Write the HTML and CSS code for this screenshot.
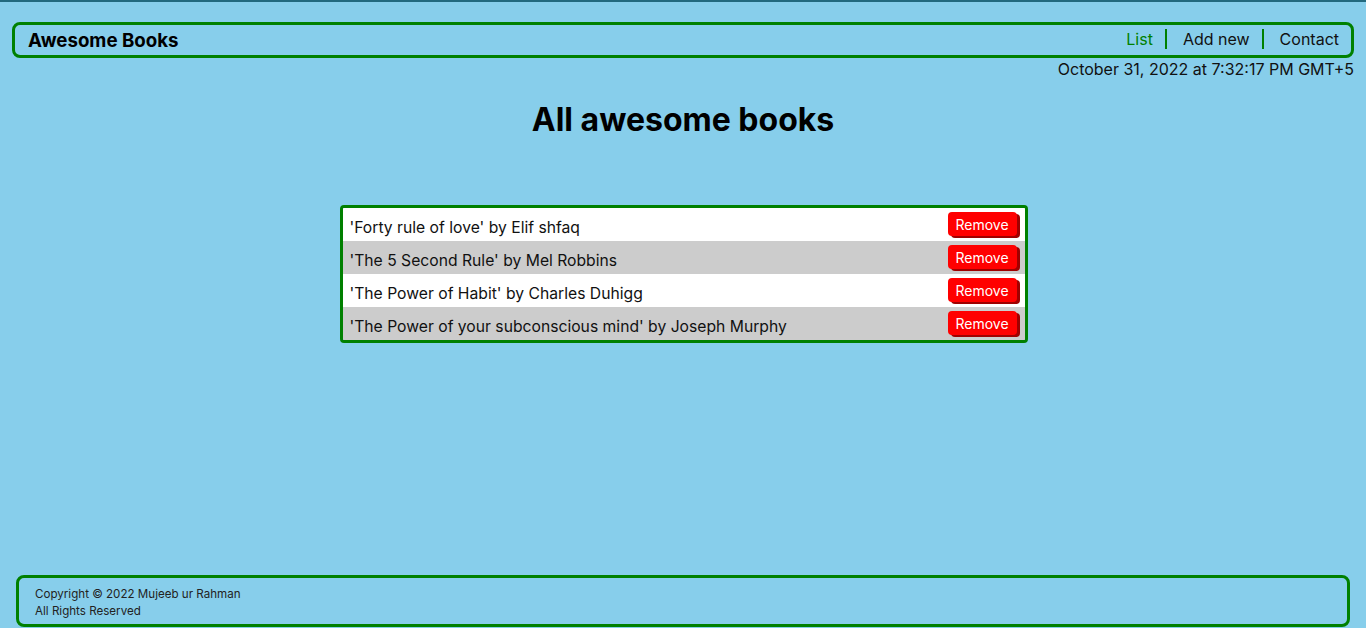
FILE: index.html
```html
<!DOCTYPE html>
<html lang="en">
<head>
<meta charset="utf-8">
<title>Awesome Books</title>
<link rel="stylesheet" href="styles.css">
</head>
<body>
<div class="page">
  <header class="header">
    <span class="brand">Awesome Books</span>
    <nav class="nav">
      <a class="nav-link active">List</a>
      <a class="nav-link sep mid">Add new</a>
      <a class="nav-link sep">Contact</a>
    </nav>
  </header>
  <div class="date">October 31, 2022 at 7:32:17 PM GMT+5</div>
  <main class="main">
    <h1 class="title">All awesome books</h1>
    <ul class="books">
      <li class="book"><span>'Forty rule of love' by Elif shfaq</span><button class="remove">Remove</button></li>
      <li class="book alt"><span>'The 5 Second Rule' by Mel Robbins</span><button class="remove">Remove</button></li>
      <li class="book"><span>'The Power of Habit' by Charles Duhigg</span><button class="remove">Remove</button></li>
      <li class="book alt"><span>'The Power of your subconscious mind' by Joseph Murphy</span><button class="remove">Remove</button></li>
    </ul>
  </main>
  <footer class="footer">
    <p>Copyright © 2022 Mujeeb ur Rahman</p>
    <p>All Rights Reserved</p>
  </footer>
</div>
</body>
</html>
```
FILE: styles.css
```css
html, body {
  margin: 0;
  padding: 0;
}
html {
  background: #87ceeb;
  border-top: 2px solid #22697e;
}
body {
  font-family: Inter, "Noto Sans", sans-serif;
  color: #111;
  background: #87ceeb;
}
.page {
  display: flex;
  flex-direction: column;
  height: 626px;
  box-sizing: border-box;
}
.header {
  margin: 20px 12px 0 12px;
  height: 36px;
  box-sizing: border-box;
  border: 3px solid #008000;
  border-radius: 8px;
  display: flex;
  align-items: center;
  justify-content: space-between;
  padding: 0 0 0 13px;
}
.brand {
  font-weight: 700;
  font-size: 18.7px;
  color: #000;
}
.nav {
  display: flex;
  align-items: center;
  padding-right: 12px;
  margin-top: -2px;
}
.nav-link {
  font-size: 16px;
  color: #111;
  padding: 0 16px;
  line-height: 20px;
}
.nav-link.active {
  color: #008000;
  padding-left: 0;
  padding-right: 12px;
}
.nav-link.sep {
  border-left: 2px solid #008000;
}
.nav-link.mid {
  padding: 0 12px 0 16px;
}
.nav-link:last-child {
  padding-right: 0;
}
.date {
  text-align: right;
  font-size: 16px;
  padding-right: 12px;
  margin-top: 1px;
  line-height: 20px;
}
.main {
  flex: 1;
  display: flex;
  flex-direction: column;
  align-items: center;
}
.title {
  font-size: 32px;
  font-weight: 700;
  color: #000;
  margin: 21px 0 0 0;
  line-height: 40px;
}
.books {
  list-style: none;
  margin: 65px 0 0 1px;
  padding: 0;
  width: 682px;
  border: 3px solid #008000;
  border-radius: 4px;
  overflow: hidden;
}
.book {
  height: 33px;
  background: #fff;
  display: flex;
  align-items: center;
  justify-content: space-between;
  padding: 0 8px 0 7px;
  font-size: 15.7px;
  color: #111;
}
.book span {
  padding-top: 5px;
}
.book.alt {
  background: #cccccc;
}
.remove {
  font-family: Inter, "Noto Sans", sans-serif;
  background: #ff0000;
  color: #fff;
  border: none;
  border-radius: 4px;
  font-size: 14px;
  width: 69px;
  height: 24px;
  padding: 0;
  margin-top: -1px;
  box-shadow: 3px 2px 0 #a00000;
  cursor: pointer;
}
.footer {
  margin: 0 16px 1px 16px;
  height: 52px;
  box-sizing: border-box;
  border: 3px solid #008000;
  border-radius: 8px;
  padding: 8px 16px 0 16px;
  font-size: 11.6px;
  color: #222;
}
.footer p {
  margin: 0;
  line-height: 17px;
}
```
